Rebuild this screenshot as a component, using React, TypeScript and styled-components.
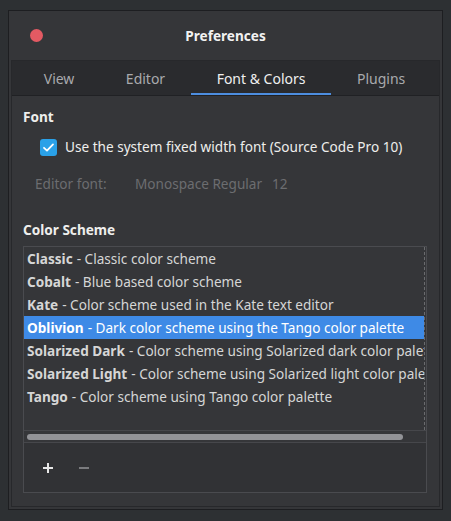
import styled, { createGlobalStyle } from 'styled-components';

const GlobalStyle = createGlobalStyle`
  body {
    margin: 0;
    background: #2d3033;
    font-family: "Noto Sans", "Open Sans", sans-serif;
    font-size: 13.6px;
    color: #eeeeec;
  }
  * { box-sizing: border-box; }
`;

const Window = styled.div`
  margin: 10px 0 0 8px;
  width: 435px;
  height: 500px;
  background: #353639;
  border: 1px solid #1d1e21;
  display: flex;
  flex-direction: column;
`;

const TitleBar = styled.div`
  height: 49px;
  display: grid;
  grid-template-columns: 1fr auto 1fr;
  align-items: center;
  padding: 0 21px;
`;

const CloseDot = styled.span`
  width: 13px;
  height: 13px;
  border-radius: 50%;
  background: #e35a63;
`;

const Title = styled.div`
  font-weight: 700;
  color: #f2f2f2;
`;

const Notebook = styled.div`
  flex: 1;
  margin: 0 2px 2px;
  border: 1px solid #27282b;
  display: flex;
  flex-direction: column;
`;

const TabBar = styled.div`
  height: 35px;
  display: flex;
  background: #2a2b2e;
  border-bottom: 1px solid #202124;
  padding: 0 8px 0 6px;
`;

const Tab = styled.div<{ $active?: boolean }>`
  flex: 1 1 auto;
  display: flex;
  align-items: center;
  justify-content: center;
  font-size: 14px;
  color: ${p => (p.$active ? '#f0f0f0' : '#a9aaad')};
  border-bottom: 2px solid ${p => (p.$active ? '#4d8ee0' : 'transparent')};
  padding-top: 2px;
`;

const Page = styled.div`
  flex: 1;
  display: flex;
  flex-direction: column;
  padding: 11px 12px 13px 11px;
`;

const Heading = styled.div`
  font-weight: 700;
  line-height: 20px;
`;

const CheckRow = styled.label`
  display: flex;
  align-items: center;
  gap: 8px;
  margin: 10px 0 0 17px;
  line-height: 20px;
`;

const CheckBox = styled.span`
  width: 17px;
  height: 17px;
  border-radius: 3px;
  background: #2aa1e8;
  display: flex;
  align-items: center;
  justify-content: center;
`;

const FontRow = styled.div`
  display: flex;
  margin: 17px 0 0 12px;
  line-height: 20px;
  color: #6c6d70;
`;

const FontLabel = styled.span`
  width: 100px;
`;

const FontValue = styled.span`
  & b {
    font-weight: 400;
    margin-left: 10px;
  }
`;

const SchemeHeading = styled(Heading)`
  margin-top: 26px;
`;

const ListFrame = styled.div`
  margin-top: 6px;
  flex: 1;
  border: 1px solid #4a4b4f;
  display: flex;
  flex-direction: column;
`;

const List = styled.div`
  flex: 1;
  margin-right: 1px;
  border-right: 1px dashed #6a6b6e;
  overflow: hidden;
`;

const Row = styled.div<{ $selected?: boolean }>`
  height: 23px;
  display: flex;
  align-items: center;
  padding-left: 3px;
  white-space: nowrap;
  overflow: hidden;
  color: ${p => (p.$selected ? '#ffffff' : '#d6d6d6')};
  background: ${p => (p.$selected ? '#3e8ae6' : 'transparent')};
  & b {
    font-weight: 700;
    margin-right: 4px;
  }
`;

const ScrollTrack = styled.div`
  height: 13px;
  border-top: 1px solid #46474b;
  border-bottom: 1px solid #46474b;
  padding: 3px 23px 0 3px;
`;

const ScrollThumb = styled.div`
  height: 6px;
  border-radius: 3px;
  background: #929397;
`;

const Toolbar = styled.div`
  height: 49px;
  display: flex;
  align-items: center;
  gap: 20px;
  padding-left: 16px;
  background: #313235;
`;

const ToolButton = styled.span<{ $disabled?: boolean }>`
  width: 16px;
  display: flex;
  justify-content: center;
  color: ${p => (p.$disabled ? '#7a7b7e' : '#e8e8e8')};
`;

const schemes = [
  { name: 'Classic', desc: 'Classic color scheme' },
  { name: 'Cobalt', desc: 'Blue based color scheme' },
  { name: 'Kate', desc: 'Color scheme used in the Kate text editor' },
  { name: 'Oblivion', desc: 'Dark color scheme using the Tango color palette', selected: true },
  { name: 'Solarized Dark', desc: 'Color scheme using Solarized dark color palette' },
  { name: 'Solarized Light', desc: 'Color scheme using Solarized light color palette' },
  { name: 'Tango', desc: 'Color scheme using Tango color palette' },
];

export default function App() {
  return (
    <>
      <GlobalStyle />
      <Window>
        <TitleBar>
          <CloseDot />
          <Title>Preferences</Title>
        </TitleBar>
        <Notebook>
          <TabBar>
            <Tab>View</Tab>
            <Tab>Editor</Tab>
            <Tab $active>Font &amp; Colors</Tab>
            <Tab>Plugins</Tab>
          </TabBar>
          <Page>
            <Heading>Font</Heading>
            <CheckRow>
              <CheckBox>
                <svg width="13" height="13" viewBox="0 0 13 13">
                  <path d="M2 6.8 L5 9.6 L11 3.4" fill="none" stroke="#ffffff" strokeWidth="1.8" strokeLinecap="round" strokeLinejoin="round" />
                </svg>
              </CheckBox>
              Use the system fixed width font (Source Code Pro 10)
            </CheckRow>
            <FontRow>
              <FontLabel>Editor font:</FontLabel>
              <FontValue>
                Monospace Regular<b>12</b>
              </FontValue>
            </FontRow>
            <SchemeHeading>Color Scheme</SchemeHeading>
            <ListFrame>
              <List>
                {schemes.map(s => (
                  <Row key={s.name} $selected={s.selected}>
                    <b>{s.name}</b>- {s.desc}
                  </Row>
                ))}
              </List>
              <ScrollTrack>
                <ScrollThumb />
              </ScrollTrack>
              <Toolbar>
                <ToolButton>
                  <svg width="12" height="12" viewBox="0 0 12 12">
                    <path d="M6 1 V11 M1 6 H11" stroke="currentColor" strokeWidth="2" />
                  </svg>
                </ToolButton>
                <ToolButton $disabled>
                  <svg width="12" height="12" viewBox="0 0 12 12">
                    <path d="M1 6 H11" stroke="currentColor" strokeWidth="2" />
                  </svg>
                </ToolButton>
              </Toolbar>
            </ListFrame>
          </Page>
        </Notebook>
      </Window>
    </>
  );
}
